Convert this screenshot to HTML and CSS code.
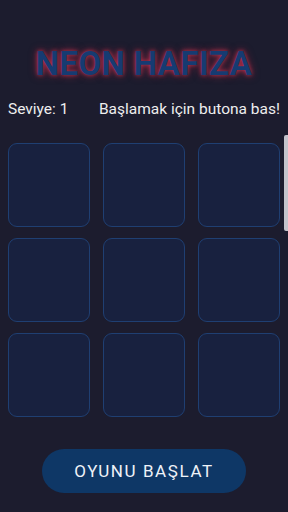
FILE: index.html
```html
<!DOCTYPE html>
<html lang="tr">
<head>
    <meta charset="UTF-8">
    <meta name="viewport" content="width=device-width, initial-scale=1.0">
    <title>Neon Hafıza</title>
    <link rel="stylesheet" href="styles.css">
</head>
<body>
    <div class="app">
        <h1 class="title">NEON HAFIZA</h1>

        <div class="status">
            <span>Seviye: 1</span>
            <span>Başlamak için butona bas!</span>
        </div>

        <div class="board">
            <div class="tile"></div>
            <div class="tile"></div>
            <div class="tile"></div>
            <div class="tile"></div>
            <div class="tile"></div>
            <div class="tile"></div>
            <div class="tile"></div>
            <div class="tile"></div>
            <div class="tile"></div>
        </div>

        <div class="actions">
            <button class="start-button">OYUNU BAŞLAT</button>
        </div>
    </div>
    <div class="scroll-thumb"></div>
</body>
</html>
```

FILE: styles.css
```css
body {
    margin: 0;
    padding: 0;
    background-color: #1c1c2e;
    color: #eeeeee;
    font-family: Roboto, "Liberation Sans", sans-serif;
    height: 512px;
    overflow: hidden;
}

.app {
    display: flex;
    flex-direction: column;
    padding: 0 8px;
}

.title {
    margin: 45px 0 0;
    text-align: center;
    font-size: 33px;
    font-weight: 700;
    line-height: 38px;
    letter-spacing: 0.4px;
    color: #163b72;
    text-shadow: 0 0 4px #c0304a, 0 0 8px rgba(200, 40, 70, 0.6);
}

.status {
    display: flex;
    justify-content: space-between;
    margin-top: 17px;
    font-size: 15.5px;
    line-height: 18px;
}

.board {
    display: grid;
    grid-template-columns: repeat(3, 82px);
    grid-auto-rows: 84px;
    column-gap: 13px;
    row-gap: 11px;
    margin-top: 25px;
}

.tile {
    box-sizing: border-box;
    background-color: #18213f;
    border: 1.5px solid #1f3f72;
    border-radius: 9px;
}

.actions {
    display: flex;
    justify-content: center;
    margin-top: 32px;
}

.start-button {
    width: 204px;
    height: 44px;
    border: none;
    border-radius: 22px;
    background-color: #0e3766;
    color: #eef2f8;
    font-family: Roboto, "Liberation Sans", sans-serif;
    font-size: 17px;
    font-weight: 400;
    letter-spacing: 1.6px;
}

.scroll-thumb {
    position: absolute;
    top: 135px;
    right: 0;
    width: 4px;
    height: 96px;
    border-radius: 2px 0 0 2px;
    background-color: #c4c4cc;
}
```
